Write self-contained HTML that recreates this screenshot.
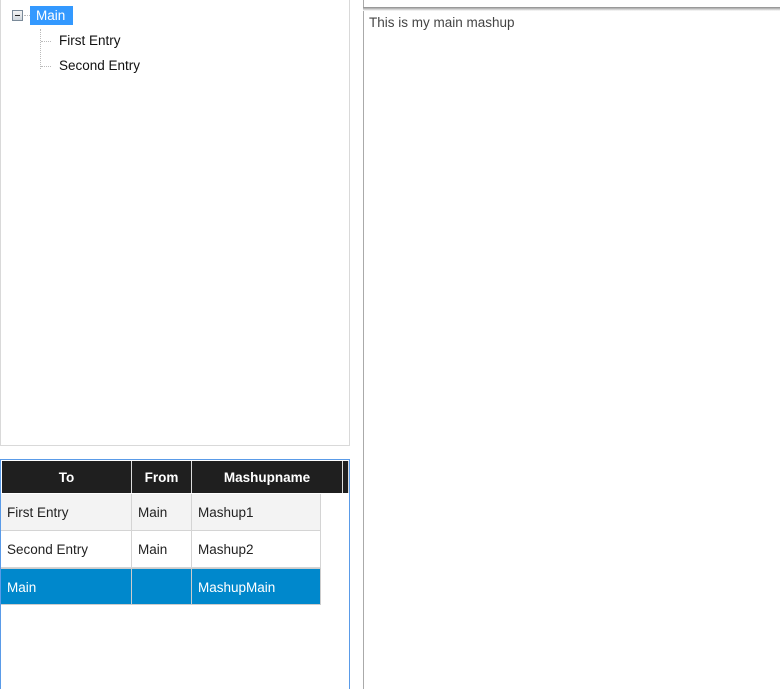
<!DOCTYPE html>
<html style="height:689px;overflow:hidden"><head><style>
body{margin:0;width:780px;height:689px;background:#fff;font-family:"Segoe UI","Liberation Sans",sans-serif;font-size:13.5px;position:relative;overflow:hidden}
.a{position:absolute}
.tree{left:0;top:-1px;width:348px;height:446px;border:1px solid #d9d9d9;border-top:none}
.grid{left:0;top:459px;width:348px;height:232px;border:1px solid #5a9be8;overflow:hidden}
.hd{position:absolute;top:1px;height:32px;background:#1f1f1f;color:#fff;font-weight:bold;text-align:center;line-height:33px;border-right:1px solid #ddd;box-sizing:border-box}
.c{position:absolute;height:37px;line-height:38px;padding-left:6px;box-sizing:border-box;border-right:1px solid #d4d4d4;border-bottom:1px solid #d4d4d4;color:#222}
.sel{background:#0088cc;color:#fff;border-color:#ccc}
</style></head><body>
<div class="a tree"></div>
<div class="a" style="left:12px;top:10px;width:11px;height:11px;border:1px solid #7a8a99;background:linear-gradient(#f4f4f4,#cfd6dd);box-sizing:border-box"><div style="position:absolute;left:2px;top:4px;width:5px;height:1px;background:#222"></div></div>
<div class="a" style="left:24px;top:15px;width:6px;border-top:1px dotted #bbb"></div>
<div class="a" style="left:40px;top:29px;height:40px;border-left:1px dotted #bbb"></div>
<div class="a" style="left:41px;top:41px;width:10px;border-top:1px dotted #bbb"></div>
<div class="a" style="left:41px;top:66px;width:10px;border-top:1px dotted #bbb"></div>
<div class="a" style="left:30px;top:6px;width:43px;height:19px;background:#3399ff;color:#fff;line-height:20px;padding-left:6px;box-sizing:border-box">Main</div>
<div class="a" style="left:59px;top:33px;color:#111">First Entry</div>
<div class="a" style="left:59px;top:58px;color:#111">Second Entry</div>
<div class="a" style="left:363px;top:0;width:1px;height:689px;background:#aaa"></div>
<div class="a" style="left:363px;top:7px;width:417px;height:4px;background:linear-gradient(#8a8a8a,#fff)"></div>
<div class="a" style="left:369px;top:15px;color:#444">This is my main mashup</div>
<div class="a grid">
<div class="hd" style="left:1px;width:130px">To</div>
<div class="hd" style="left:131px;width:60px">From</div>
<div class="hd" style="left:191px;width:151px">Mashupname</div>
<div class="hd" style="left:342px;width:6px"></div>
<div class="c" style="left:0;top:34px;width:131px;background:#f3f3f3">First Entry</div>
<div class="c" style="left:131px;top:34px;width:60px;background:#f3f3f3">Main</div>
<div class="c" style="left:191px;top:34px;width:129px;background:#f3f3f3">Mashup1</div>
<div class="c" style="left:0;top:71px;width:131px">Second Entry</div>
<div class="c" style="left:131px;top:71px;width:60px">Main</div>
<div class="c" style="left:191px;top:71px;width:129px">Mashup2</div>
<div class="c sel" style="left:0;top:108px;width:131px;border-top:1px solid #ccc">Main</div>
<div class="c sel" style="left:131px;top:108px;width:60px;border-top:1px solid #ccc"></div>
<div class="c sel" style="left:191px;top:108px;width:129px;border-top:1px solid #ccc">MashupMain</div>
</div>
</body></html>
